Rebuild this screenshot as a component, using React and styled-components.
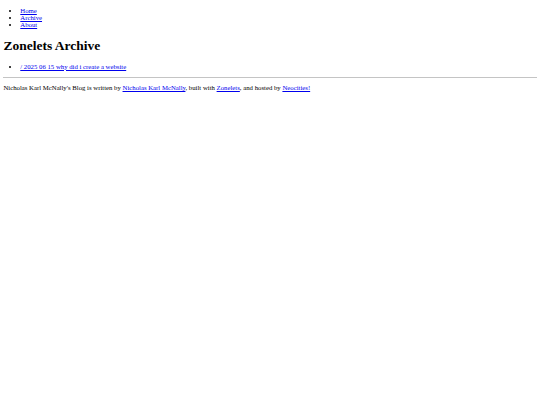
import React from 'react'
import styled, { createGlobalStyle } from 'styled-components';

// page is a plain default-styled document, shown at 540/1280 of its size
const GlobalStyle = createGlobalStyle`
    html {
        background: #ffffff;
    }
    body {
        margin: 0 3.4px 3.4px;
        font-family: "Liberation Serif", "Times New Roman", serif;
        font-size: 6.75px;
        color: #000000;
    }
`

const App = () => {
    return (
        <>
            <GlobalStyle />
            <Page>
                <LinkList>
                    <li><Link href="#">Home</Link></li>
                    <li><Link href="#">Archive</Link></li>
                    <li><Link href="#">About</Link></li>
                </LinkList>
                <Title>Zonelets Archive</Title>
                <LinkList>
                    <li><Link href="#">/ 2025 06 15 why did i create a website</Link></li>
                </LinkList>
                <Divider />
                <Footer>
                    Nicholas Karl McNally's Blog is written by <Link href="#">Nicholas Karl McNally</Link>, built with <Link href="#">Zonelets</Link>, and hosted by <Link href="#">Neocities!</Link>
                </Footer>
            </Page>
        </>
    )
}

const Page = styled.div`
    display: block;
`

const LinkList = styled.ul`
    margin: 6.75px 0;
    padding-left: 16.9px;
    list-style: disc;
`

const Link = styled.a`
    color: #0000ee;
    text-decoration: underline;
    text-decoration-thickness: 0.5px;
    text-underline-offset: 1px;
`

const Title = styled.h1`
    font-size: 13.5px;
    font-weight: 700;
    margin: 10.2px 0 9px;
`

const Divider = styled.hr`
    margin: 3.4px 0;
    border: none;
    border-top: 1px solid #c4c4c4;
    height: 0;
`

const Footer = styled.footer`
    margin: 6.75px 0;
`

export default App;
